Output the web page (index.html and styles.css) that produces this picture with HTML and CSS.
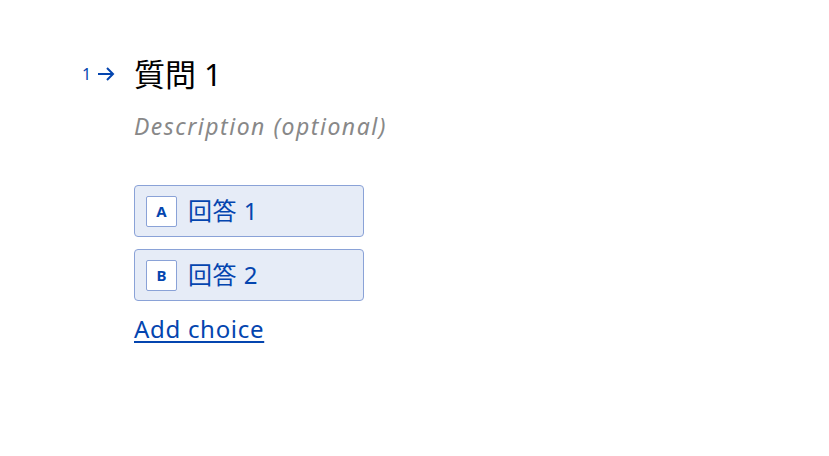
FILE: index.html
```html
<!DOCTYPE html>
<html lang="ja">
<head>
<meta charset="utf-8">
<link rel="stylesheet" href="styles.css">
</head>
<body>
<div class="page">
  <div class="question">
    <div class="num">
      <span class="idx">1</span>
      <svg class="arrow" width="18" height="16" viewBox="0 0 18 16"><path d="M1 8H16M10 2L16 8L10 14" fill="none" stroke="#0445AF" stroke-width="2"/></svg>
    </div>
    <div class="content">
      <h1 class="title">質問 1</h1>
      <p class="desc">Description (optional)</p>
      <div class="choices">
        <div class="choice"><span class="key">A</span><span class="label">回答 1</span></div>
        <div class="choice"><span class="key">B</span><span class="label">回答 2</span></div>
      </div>
      <a class="add" href="#">Add choice</a>
    </div>
  </div>
</div>
</body>
</html>
```
FILE: styles.css
```css
html, body { margin: 0; padding: 0; background: #fff; }
body { font-family: "Noto Sans", "Noto Sans CJK JP", sans-serif; }
.page { padding: 52px 0 0 80px; }
.question { display: flex; }
.num { width: 54px; display: flex; align-items: center; gap: 6px; height: 44px; color: #0445AF; padding-left: 2px; box-sizing: border-box; }
.idx { font-size: 16px; line-height: 1; }
.arrow { display: block; }
.content { display: flex; flex-direction: column; align-items: flex-start; }
.title { margin: 0; font-size: 31px; font-weight: 400; line-height: 44px; color: #000; }
.desc { margin: 14px 0 0; font-size: 23px; letter-spacing: 1.5px; font-style: italic; color: #888; line-height: 32px; }
.choices { margin-top: 43px; display: flex; flex-direction: column; gap: 12px; }
.choice { width: 230px; height: 52px; box-sizing: border-box; border: 1px solid #8aa2d7; border-radius: 4px; background: #e6ecf7; display: flex; align-items: center; padding-left: 11px; }
.key { width: 31px; height: 31px; box-sizing: border-box; border: 1px solid #8aa2d7; border-radius: 2px; background: #fff; color: #0445AF; font-weight: 700; font-size: 15px; display: flex; align-items: center; justify-content: center; }
.label { margin-left: 11px; font-size: 24px; letter-spacing: 0.5px; color: #0445AF; line-height: 1; }
.add { margin-top: 11px; font-size: 24px; letter-spacing: 0.7px; color: #0445AF; line-height: 34px; text-decoration: underline; text-underline-offset: 3px; text-decoration-thickness: 2px; }
```
